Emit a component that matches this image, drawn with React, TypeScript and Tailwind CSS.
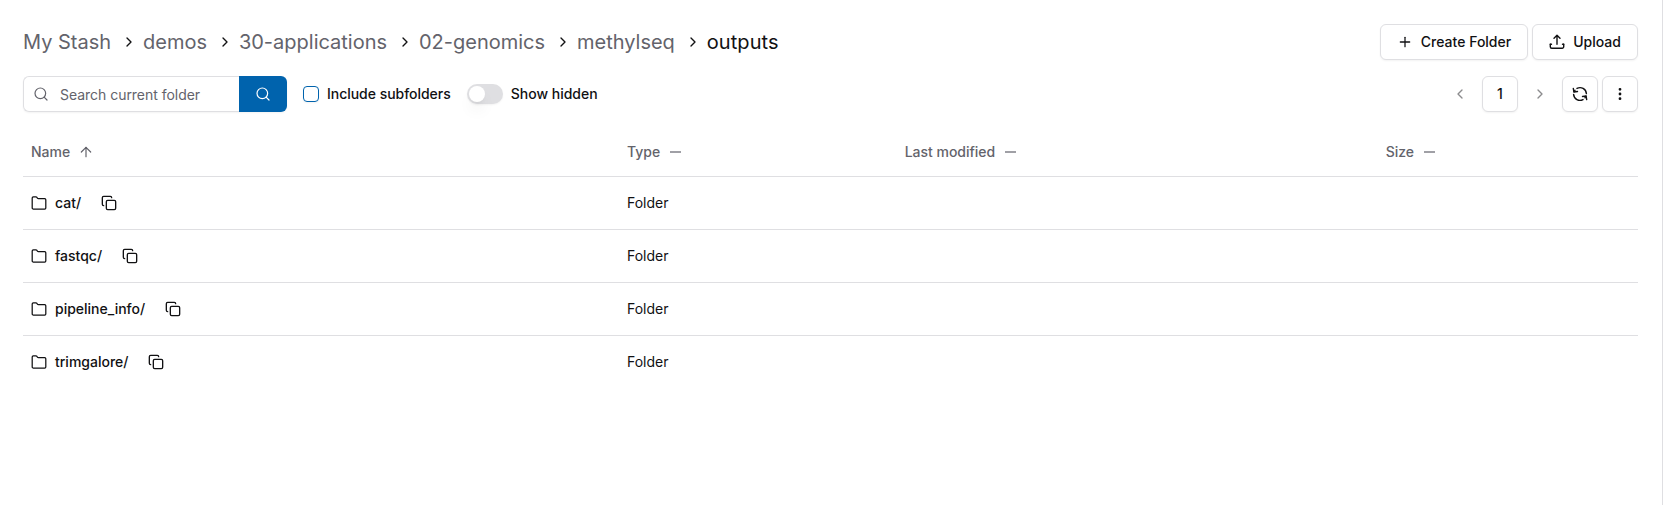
import { Fragment } from "react";
import type { ReactNode } from "react";
import {
  ArrowUp,
  ChevronLeft,
  ChevronRight,
  Copy,
  EllipsisVertical,
  Plus,
  Search,
} from "lucide-react";

const crumbs = ["My Stash", "demos", "30-applications", "02-genomics", "methylseq", "outputs"];
const folders = ["cat/", "fastqc/", "pipeline_info/", "trimgalore/"];

function Svg({ children, width = 1.25 }: { children: ReactNode; width?: number }) {
  return (
    <svg
      width="16"
      height="16"
      viewBox="0 0 16 16"
      fill="none"
      stroke="currentColor"
      strokeWidth={width}
      strokeLinecap="round"
      strokeLinejoin="round"
      className="shrink-0"
    >
      {children}
    </svg>
  );
}

function FolderIcon() {
  return (
    <Svg>
      <path d="M1.2 12.9V2.9a1.1 1.1 0 0 1 1.1-1.1h2.6c.4 0 .8.2 1 .6l.5.7c.2.3.6.5 1 .5h6.3a1.1 1.1 0 0 1 1.1 1.1v8.2a1.1 1.1 0 0 1-1.1 1.1H2.3a1.1 1.1 0 0 1-1.1-1.1Z" />
    </Svg>
  );
}

function UploadIcon() {
  return (
    <Svg width={1.4}>
      <path d="M8 10.3V1.4M5 4.2 8 1.2l3 3" />
      <path d="M1.3 10.2v2.6A1.5 1.5 0 0 0 2.8 14.3h10.4a1.5 1.5 0 0 0 1.5-1.5v-2.6" />
      <path d="M1.3 10.2h1.2M13.5 10.2h1.2" />
    </Svg>
  );
}

function RefreshIcon() {
  return (
    <Svg width={1.4}>
      <path d="M1.3 2.4 1.9 6l3.6-.5" />
      <path d="M14.7 13.6 14.1 10l-3.6.5" />
      <path d="M5 2.4A6.4 6.4 0 0 1 14.4 7.6" />
      <path d="M11 13.6A6.4 6.4 0 0 1 1.6 8.4" />
      <path d="M2.1 5.8A6.3 6.3 0 0 1 3 4.3M13.9 10.2a6.3 6.3 0 0 1-.9 1.5" />
    </Svg>
  );
}

function Button({ className = "", children }: { className?: string; children: ReactNode }) {
  return (
    <button
      className={`flex h-9 items-center justify-center rounded-md border border-[#dfdfe2] bg-white text-sm font-medium shadow-[0_1px_2px_rgba(0,0,0,0.05)] ${className}`}
    >
      {children}
    </button>
  );
}

function Column({ label, className, sorted }: { label: string; className: string; sorted?: boolean }) {
  return (
    <div className={`flex items-center gap-2 pl-2 tracking-[-0.02px] ${className}`}>
      {label}
      {sorted ? (
        <ArrowUp size={16} strokeWidth={1.8} />
      ) : (
        <span className="ml-[2.2px] h-0.5 w-[11px] bg-[#a0a0a6]" />
      )}
    </div>
  );
}

export default function App() {
  return (
    <div className="h-[505px] w-full border-r border-[#dfdfe2] bg-white pt-6 pr-6 pl-[23px] font-['Inter',sans-serif] text-sm text-[#111113]">
      <header className="flex h-9 items-center justify-between">
        <nav className="flex items-center text-xl">
          {crumbs.map((crumb, i) => (
            <Fragment key={crumb}>
              {i > 0 && <ChevronRight size={16} strokeWidth={2} className="mr-[6px] ml-[9.9px]" />}
              <span className={i === crumbs.length - 1 ? "tracking-[0.08px]" : "text-[#63636b]"}>{crumb}</span>
            </Fragment>
          ))}
        </nav>
        <div className="flex gap-1">
          <Button className="w-[148px] gap-2">
            <Plus size={16} strokeWidth={1.9} />
            Create Folder
          </Button>
          <Button className="w-[106px] gap-2">
            <UploadIcon />
            Upload
          </Button>
        </div>
      </header>

      <div className="mt-4 flex h-9 items-center justify-between">
        <div className="flex items-center font-medium">
          <div className="flex h-9 rounded-md shadow-[0_1px_2px_rgba(0,0,0,0.05)]">
            <div className="flex w-[216px] items-center gap-[11px] rounded-l-md border border-r-0 border-[#dfdfe2] pl-[9px] font-normal tracking-[-0.03px] text-[#63636b]">
              <Search size={16} strokeWidth={1.8} />
              <span className="pt-px">Search current folder</span>
            </div>
            <button className="flex w-12 items-center justify-center rounded-r-md bg-[#0063ad] text-white">
              <Search size={16} strokeWidth={1.8} />
            </button>
          </div>
          <span className="ml-4 size-4 rounded-[4px] border border-[#0063ad] shadow-[0_1px_2px_rgba(0,0,0,0.05)]" />
          <span className="ml-2 tracking-[-0.03px]">Include subfolders</span>
          <span className="ml-4 flex h-5 w-9 items-center rounded-full bg-[#dfdfe2] p-0.5 shadow-[0_1px_2px_rgba(0,0,0,0.05)]">
            <span className="size-4 rounded-full bg-white shadow-lg" />
          </span>
          <span className="ml-2">Show hidden</span>
        </div>
        <div className="flex items-center gap-1">
          <span className="flex w-9 justify-center text-[#8b8b8d]">
            <ChevronLeft size={16} strokeWidth={2} />
          </span>
          <Button className="w-9">1</Button>
          <span className="flex w-9 justify-center text-[#8b8b8d]">
            <ChevronRight size={16} strokeWidth={2} />
          </span>
          <Button className="w-9">
            <RefreshIcon />
          </Button>
          <Button className="w-9">
            <EllipsisVertical size={16} strokeWidth={2.2} />
          </Button>
        </div>
      </div>

      <div className="mt-4">
        <div className="flex h-[49px] items-center border-b border-[#dfdfe2] font-medium text-[#63636b]">
          <Column label="Name" className="w-[596px]" sorted />
          <Column label="Type" className="w-[277.7px]" />
          <Column label="Last modified" className="w-[481px]" />
          <Column label="Size" className="flex-1" />
        </div>
        {folders.map((name) => (
          <div key={name} className="flex h-[53px] items-center border-b border-[#dfdfe2] last:border-transparent">
            <div className="flex w-[596px] items-center pl-2 font-medium">
              <FolderIcon />
              <span className="mr-5 ml-2">{name}</span>
              <Copy size={16} strokeWidth={2} />
            </div>
            <div className="pl-2">Folder</div>
          </div>
        ))}
      </div>
    </div>
  );
}
